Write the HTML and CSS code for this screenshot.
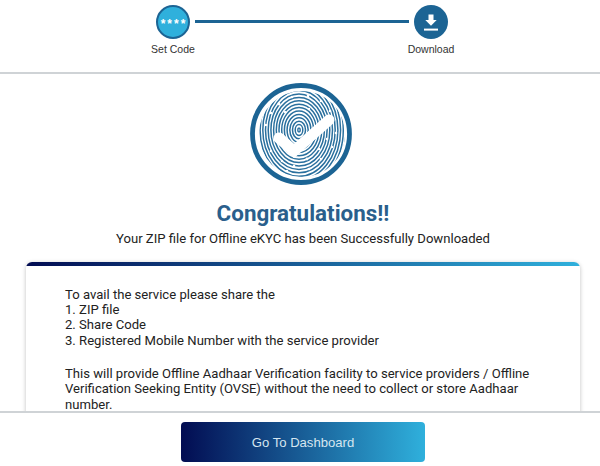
FILE: index.html
```html
<!DOCTYPE html>
<html lang="en">
<head>
  <meta charset="UTF-8">
  <title>Offline eKYC</title>
  <meta name="viewport" content="width=device-width, initial-scale=1.0">
  <link rel="stylesheet" href="styles.css">
</head>
<body>
  <div class="page">
    <div class="stepper">
      <div class="step">
        <div class="step-icon step-icon-code">****</div>
        <div class="step-label">Set Code</div>
      </div>
      <div class="step-line"></div>
      <div class="step">
        <div class="step-icon step-icon-download">
          <svg width="18" height="18" viewBox="0 0 18 18">
            <path d="M6.5 1.5h5v5.6h3.2L9 12.8 3.3 7.1h3.2z" fill="#fff"/>
            <rect x="2" y="15.6" width="14" height="2" fill="#fff"/>
          </svg>
        </div>
        <div class="step-label">Download</div>
      </div>
    </div>

    <div class="content">
      <svg class="logo" width="104" height="104" viewBox="0 0 104 104">
        <clipPath id="printClip"><circle cx="53" cy="51" r="43"/></clipPath>
        <circle cx="52" cy="51" r="48.5" fill="none" stroke="#1c6494" stroke-width="4.8"/>
        <g clip-path="url(#printClip)" fill="none" stroke="#2a709e" stroke-width="1.5">
          <ellipse cx="50" cy="47" rx="1.2" ry="2"/>
          <ellipse cx="50" cy="47" rx="3.8" ry="5.4"/>
          <ellipse cx="50" cy="47" rx="6.5" ry="8.8"/>
          <ellipse cx="50" cy="47" rx="9.2" ry="12.2"/>
          <ellipse cx="50" cy="47" rx="11.9" ry="15.6"/>
          <ellipse cx="50" cy="47" rx="14.6" ry="19"/>
          <ellipse cx="50" cy="47" rx="17.3" ry="22.4"/>
          <ellipse cx="50" cy="47" rx="20" ry="25.8"/>
          <ellipse cx="50" cy="47" rx="22.7" ry="29.2"/>
          <ellipse cx="50" cy="47" rx="25.4" ry="32.6"/>
          <ellipse cx="50" cy="47" rx="28.1" ry="36"/>
          <ellipse cx="50" cy="47" rx="30.8" ry="39.4"/>
          <ellipse cx="50" cy="47" rx="33.5" ry="42.8"/>
          <ellipse cx="50" cy="47" rx="36.2" ry="46.2"/>
          <ellipse cx="50" cy="47" rx="38.9" ry="49.6"/>
          <ellipse cx="50" cy="47" rx="41.6" ry="53"/>
          <ellipse cx="50" cy="47" rx="44.3" ry="56.4"/>
          <ellipse cx="50" cy="47" rx="47" ry="59.8"/>
          <ellipse cx="50" cy="47" rx="49.7" ry="63.2"/>
        </g>
        <g fill="#fff">
          <circle cx="30" cy="21" r="1.4"/>
          <circle cx="43" cy="14" r="1.3"/>
          <circle cx="59" cy="13" r="1.3"/>
          <circle cx="72" cy="18" r="1.3"/>
          <circle cx="22" cy="30" r="1.3"/>
          <circle cx="17" cy="42" r="1.3"/>
          <circle cx="36" cy="29" r="1.2"/>
          <circle cx="60" cy="26" r="1.2"/>
          <circle cx="81" cy="28" r="1.3"/>
          <circle cx="87" cy="50" r="1.3"/>
          <circle cx="78" cy="56" r="1.3"/>
          <circle cx="70" cy="66" r="1.3"/>
          <circle cx="83" cy="64" r="1.3"/>
          <circle cx="72" cy="76" r="1.3"/>
          <circle cx="58" cy="76" r="1.4"/>
          <circle cx="60" cy="86" r="1.3"/>
          <circle cx="45" cy="83" r="1.3"/>
          <circle cx="33" cy="78" r="1.3"/>
          <circle cx="22" cy="68" r="1.3"/>
          <circle cx="38" cy="88" r="1.2"/>
        </g>
        <path d="M30 55 L45 68 L80 37" fill="none" stroke="#fff" stroke-width="11" stroke-linecap="round" stroke-linejoin="miter"/>
      </svg>
      <h1 class="title">Congratulations!!</h1>
      <p class="subtitle">Your ZIP file for Offline eKYC has been Successfully Downloaded</p>
      <div class="card">
        <p class="card-text">To avail the service please share the<br>1. ZIP file<br>2. Share Code<br>3. Registered Mobile Number with the service provider</p>
        <p class="card-text">This will provide Offline Aadhaar Verification facility to service providers / Offline Verification Seeking Entity (OVSE) without the need to collect or store Aadhaar number.</p>
      </div>
    </div>

    <div class="footer">
      <button class="dashboard-btn">Go To Dashboard</button>
    </div>
  </div>
</body>
</html>
```
FILE: styles.css
```css
body {
  margin: 0;
  padding: 0;
  background: #fff;
  font-family: Roboto, Arial, sans-serif;
  color: #222;
}
.page {
  display: flex;
  flex-direction: column;
  height: 466px;
  overflow: hidden;
}
.stepper {
  display: flex;
  justify-content: center;
  align-items: flex-start;
  flex-shrink: 0;
  height: 67px;
  padding: 5px 0 0 4px;
  border-bottom: 2px solid #cfd3d6;
}
.step {
  display: flex;
  flex-direction: column;
  align-items: center;
  width: 60px;
}
.step-icon {
  width: 34px;
  height: 34px;
  border-radius: 50%;
  box-sizing: border-box;
  display: flex;
  align-items: center;
  justify-content: center;
}
.step-icon-code {
  background: #2fb0dc;
  border: 2.5px solid #1c6494;
  color: #fff;
  font-family: "Liberation Sans", Arial, sans-serif;
  font-size: 12px;
  font-weight: bold;
  letter-spacing: 2px;
  padding: 3px 0 0 2px;
}
.step-icon-download {
  background: #1c6494;
}
.step-label {
  margin-top: 4px;
  font-family: "Liberation Sans", Arial, sans-serif;
  font-size: 10.5px;
  line-height: 13px;
  color: #333;
}
.step-line {
  width: 214px;
  height: 3px;
  margin: 15px -8px 0 -8px;
  background: #1c6494;
}
.content {
  flex: 1;
  min-height: 0;
  overflow: hidden;
  display: flex;
  flex-direction: column;
  align-items: center;
  padding: 9px 20px 0 26px;
}
.logo {
  flex-shrink: 0;
  margin-right: 4px;
}
.title {
  margin: 12px 0 0 0;
  font-size: 22.4px;
  line-height: 28px;
  font-weight: 700;
  color: #2a5f8c;
}
.subtitle {
  margin: 4px 0 0 0;
  font-size: 13.1px;
  line-height: 16px;
  color: #222;
}
.card {
  align-self: stretch;
  flex-shrink: 0;
  margin-top: 15px;
  padding: 24.5px 40px 20px 39px;
  background: #fff;
  border-radius: 6px;
  box-shadow: 0 1px 4px rgba(0,0,0,0.25);
  position: relative;
  overflow: hidden;
}
.card::before {
  content: "";
  position: absolute;
  top: 0;
  left: 0;
  right: 0;
  height: 4px;
  background: linear-gradient(to right, #020c52, #2fb0dc);
}
.card-text {
  margin: 0 0 17.6px 0;
  font-size: 13.1px;
  line-height: 15.4px;
  color: #222;
}
.footer {
  flex-shrink: 0;
  height: 44px;
  padding-top: 9px;
  border-top: 2px solid #cfd3d6;
  display: flex;
  justify-content: center;
  background: #fff;
}
.dashboard-btn {
  width: 244px;
  height: 40px;
  margin-left: 6px;
  border: none;
  border-radius: 4px;
  background: linear-gradient(to right, #020c52, #2fb0dc);
  color: #d5e6f0;
  font-family: "Liberation Sans", Arial, sans-serif;
  font-size: 13.1px;
  cursor: pointer;
}
```
